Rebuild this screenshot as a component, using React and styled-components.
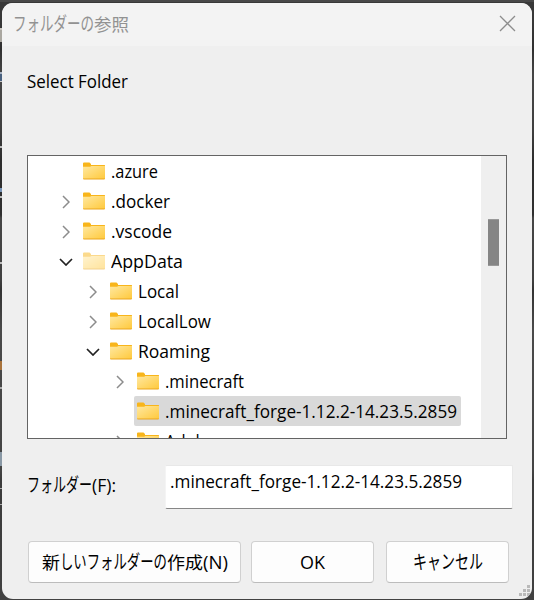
import React, { useLayoutEffect, useRef, useState } from "react";
import styled, { createGlobalStyle } from "styled-components";

const GlobalStyle = createGlobalStyle`
  * { box-sizing: border-box; }
  html, body { margin: 0; overflow: hidden; }
  body {
    font-family: "Open Sans", "Noto Sans CJK JP", sans-serif;
    font-size: 17.5px;
    color: #000;
  }
`;

const Desktop = styled.div`
  width: 534px;
  height: 600px;
  padding: 3px 2px 1px;
  background:
    linear-gradient(transparent 28px, #c9c5bf 28px 30px, #aaa7a0 30px 42px, transparent 42px 72px, #a9b4c4 72px 74px, #49617f 74px 81px, #c8c8c8 81px 82px, transparent 82px 146px, #bbb 146px 148px, transparent 148px 188px, #7793b5 188px 192px, transparent 192px 196px, #bbb 196px 198px, transparent 198px 262px, #bbb 262px 264px, transparent 264px 361px, #a9733b 361px 370px, transparent 370px 387px, #aaa 387px 389px, transparent 389px 452px, #8998a5 452px 466px, transparent 466px 488px, #aaa 488px 489px, transparent 489px 504px, #aaa 504px 505px, transparent 505px) left / 2px 600px no-repeat,
    linear-gradient(#484848 0 2px, #383838 2px 20px, #303030 50px, #333 52px, #464646 75px, #3f3f3f 130px, #2d2d2d 160px, #303030 215px, #464646 218px, #404040 280px, #333 290px, #4a4a4a 330px, #444 470px, #3b3b3b 480px, #414141);
`;

const Dialog = styled.main`
  width: 530px;
  height: 596px;
  display: flex;
  flex-direction: column;
  position: relative;
  overflow: hidden;
  border-radius: 11px;
  background: #efefef;
`;

const TitleBar = styled.header`
  height: 43px;
  flex: none;
  display: flex;
  align-items: center;
  justify-content: space-between;
  padding: 0 16px 2px 11px;
  background: #f3f3f3;
  color: #929292;
`;

const CloseButton = styled.button`
  display: flex;
  padding: 0;
  border: 0;
  background: none;
`;

const Prompt = styled.div`
  height: 109px;
  flex: none;
  padding: 22px 0 0 25px;
  line-height: 26px;
`;

const TreeBox = styled.section`
  width: 480px;
  height: 284px;
  flex: none;
  display: flex;
  margin-left: 25px;
  border: 1px solid #646464;
  background: #fff;
`;

const Tree = styled.div`
  flex: 1;
  height: 282px;
  overflow: hidden;
`;

const Row = styled.div`
  height: 30px;
  display: flex;
  padding-left: ${({ $level }) => 23 + $level * 27}px;
`;

const Toggle = styled.span`
  width: 29px;
  display: flex;
  align-items: center;
  justify-content: center;
  padding-top: 2px;
`;

const Item = styled.span`
  height: 30px;
  display: flex;
  align-items: center;
  gap: 6px;
  padding: 0 4px 0 3px;
  border-radius: 2px;
  background: ${({ $selected }) => ($selected ? "#d9d9d9" : "transparent")};
`;

const FolderSvg = styled.svg`
  display: block;
  margin-bottom: 1px;
  opacity: ${({ $faded }) => ($faded ? 0.5 : 1)};
`;

const ScrollTrack = styled.div`
  width: 25px;
  padding: 63px 0 0 7px;
  background: #efefef;
`;

const ScrollThumb = styled.div`
  width: 11px;
  height: 47px;
  background: #858585;
  border: solid #999;
  border-width: 1px 0;
`;

const FieldRow = styled.div`
  display: flex;
  flex: none;
  align-items: flex-start;
  margin: 26px 19px 0 25px;
  height: 45px;
`;

const FieldLabel = styled.label`
  width: 138px;
  padding-top: 7px;
`;

const Field = styled.div`
  flex: 1;
  height: 44px;
  padding: 2px 0 0 4px;
  line-height: 26px;
  background: #fff;
  border: 1px solid #e8e8e8;
  border-left-color: #f4f4f4;
  border-bottom: 1px solid #868686;
  border-radius: 2px;
`;

const Buttons = styled.footer`
  display: flex;
  flex: none;
  margin: 31px 0 0 26px;
`;

const Button = styled.button`
  width: ${({ $width }) => $width}px;
  height: 42px;
  margin-right: ${({ $gap = 0 }) => $gap}px;
  display: flex;
  align-items: center;
  justify-content: center;
  padding: 0;
  border: 1px solid #d0d0d0;
  border-bottom-color: #bcbcbc;
  border-radius: 4px;
  background: #fdfdfd;
  color: #000;
  font: inherit;
`;

const Grip = styled.svg`
  position: absolute;
  right: 1px;
  bottom: 2px;
`;

const FitBox = styled.span`
  display: inline-block;
  width: ${({ $width }) => $width}px;
  height: 26px;
  line-height: 26px;
  font-size: ${({ $kana }) => ($kana ? "19.5px" : "inherit")};
  vertical-align: top;
  white-space: nowrap;
`;

const FitInner = styled.span`
  display: inline-block;
  transform-origin: 0 50%;
`;

function FitText({ width, kana, children }) {
  const ref = useRef(null);
  const [scale, setScale] = useState(1);
  useLayoutEffect(() => {
    setScale(width / ref.current.getBoundingClientRect().width);
  }, [width]);
  return (
    <FitBox $width={width} $kana={kana}>
      <FitInner ref={ref} style={{ transform: `scaleX(${scale})` }}>
        {children}
      </FitInner>
    </FitBox>
  );
}

function Folder({ faded }) {
  return (
    <FolderSvg $faded={faded} width="22" height="18" viewBox="0 0 22 18">
      <defs>
        <linearGradient id="folderFace" x1="0" y1="0" x2="1" y2="1">
          <stop offset="0" stopColor="#ffe8a0" />
          <stop offset="1" stopColor="#ffc93c" />
        </linearGradient>
      </defs>
      <path d="M0 1.5Q0 .5 1 .5H6.5L8 2V3H21.5Q22 3 22 3.5V6H0Z" fill="#f8b51b" />
      <path d="M0 4.8H7L8.5 4H22V17H0Z" fill="url(#folderFace)" />
      <path d="M0 16.5H22Q22 17.6 21 17.6H1Q0 17.6 0 16.5Z" fill="#eba51e" />
    </FolderSvg>
  );
}

function Chevron({ open }) {
  return open ? (
    <svg width="14" height="8" viewBox="0 0 14 8" fill="none" stroke="#222" strokeWidth="1.7">
      <path d="M1 1L7 7L13 1" />
    </svg>
  ) : (
    <svg width="8" height="14" viewBox="0 0 8 14" fill="none" stroke="#8c8c8c" strokeWidth="1.5">
      <path d="M1 1L7 7L1 13" />
    </svg>
  );
}

const folders = [
  { name: ".azure", level: 0, width: 47 },
  { name: ".docker", level: 0, width: 59, state: "closed" },
  { name: ".vscode", level: 0, width: 61, state: "closed" },
  { name: "AppData", level: 0, width: 72, state: "open", faded: true },
  { name: "Local", level: 1, width: 41, state: "closed" },
  { name: "LocalLow", level: 1, width: 73, state: "closed" },
  { name: "Roaming", level: 1, width: 72, state: "open" },
  { name: ".minecraft", level: 2, width: 79, state: "closed" },
  { name: ".minecraft_forge-1.12.2-14.23.5.2859", level: 2, width: 292, selected: true },
  { name: "Adobe", level: 2, width: 50, state: "closed" },
];

export default function App() {
  return (
    <>
      <GlobalStyle />
      <Desktop>
        <Dialog>
          <TitleBar>
            <span>
              <FitText kana width={81}>フォルダーの</FitText>
              <FitText width={35}>参照</FitText>
            </span>
            <CloseButton aria-label="閉じる">
              <svg width="17" height="17" viewBox="0 0 17 17" stroke="#8d8d8d" strokeWidth="1.3">
                <path d="M1 1L16 16M16 1L1 16" />
              </svg>
            </CloseButton>
          </TitleBar>
          <Prompt>
            <FitText width={101}>Select Folder</FitText>
          </Prompt>
          <TreeBox>
            <Tree>
              {folders.map((f) => (
                <Row key={f.name} $level={f.level}>
                  <Toggle>{f.state && <Chevron open={f.state === "open"} />}</Toggle>
                  <Item $selected={f.selected}>
                    <Folder faded={f.faded} />
                    <FitText width={f.width}>{f.name}</FitText>
                  </Item>
                </Row>
              ))}
            </Tree>
            <ScrollTrack>
              <ScrollThumb />
            </ScrollTrack>
          </TreeBox>
          <FieldRow>
            <FieldLabel>
              <FitText kana width={65}>フォルダー</FitText>
              <FitText width={24}>(F):</FitText>
            </FieldLabel>
            <Field>
              <FitText width={292}>.minecraft_forge-1.12.2-14.23.5.2859</FitText>
            </Field>
          </FieldRow>
          <Buttons>
            <Button $width={213} $gap={10}>
              <FitText width={18}>新</FitText>
              <FitText kana width={107}>しいフォルダーの</FitText>
              <FitText width={36}>作成</FitText>
              <FitText width={25}>(N)</FitText>
            </Button>
            <Button $width={123} $gap={12}>
              <FitText width={25}>OK</FitText>
            </Button>
            <Button $width={123}>
              <FitText kana width={70}>キャンセル</FitText>
            </Button>
          </Buttons>
          <Grip width="12" height="12" viewBox="0 0 12 12" fill="#b9b9b9">
            <path d="M8 0h3v3h-3zM4 4h3v3h-3zM8 4h3v3h-3zM0 8h3v3h-3zM4 8h3v3h-3zM8 8h3v3h-3z" />
          </Grip>
        </Dialog>
      </Desktop>
    </>
  );
}
